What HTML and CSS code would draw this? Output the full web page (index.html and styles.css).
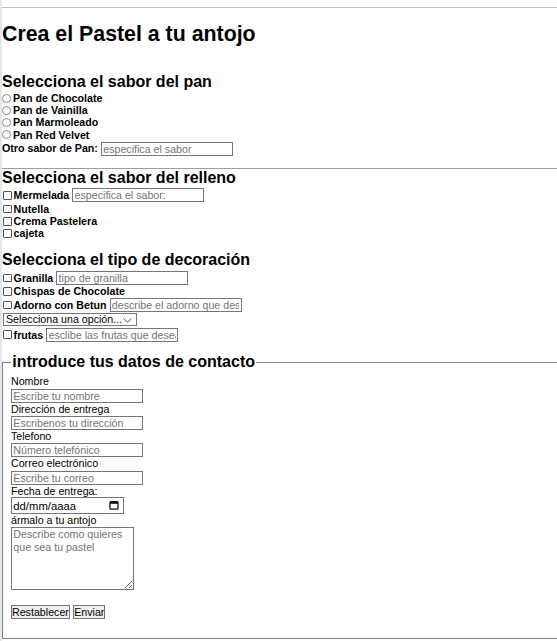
FILE: index.html
```html
<!DOCTYPE html>
<html lang="es">
<head>
<meta charset="utf-8">
<title>Crea el Pastel a tu antojo</title>
<link rel="stylesheet" href="styles.css">
</head>
<body>
<div class="topline"></div>
<h1 class="title">Crea el Pastel a tu antojo</h1>
<form class="form">
  <h2 class="sec-title sec-pan">Selecciona el sabor del pan</h2>
  <label class="row first"><input type="radio" name="pan" class="radio"><span>Pan de Chocolate</span></label>
  <label class="row"><input type="radio" name="pan" class="radio"><span>Pan de Vainilla</span></label>
  <label class="row"><input type="radio" name="pan" class="radio"><span>Pan Marmoleado</span></label>
  <label class="row"><input type="radio" name="pan" class="radio"><span>Pan Red Velvet</span></label>
  <div class="row row-input"><label class="plain-lbl">Otro sabor de Pan:</label><input type="text" class="txt" placeholder="especifica el sabor"></div>

  <hr class="divider">

  <h2 class="sec-title sec-relleno">Selecciona el sabor del relleno</h2>
  <div class="row row-input"><label class="chk-lbl"><input type="checkbox" class="check"><span>Mermelada</span></label><input type="text" class="txt" placeholder="especifica el sabor:"></div>
  <label class="row"><input type="checkbox" class="check"><span>Nutella</span></label>
  <label class="row"><input type="checkbox" class="check"><span>Crema Pastelera</span></label>
  <label class="row"><input type="checkbox" class="check"><span>cajeta</span></label>

  <h2 class="sec-title sec-deco">Selecciona el tipo de decoración</h2>
  <div class="row row-input first-deco"><label class="chk-lbl"><input type="checkbox" class="check"><span>Granilla</span></label><input type="text" class="txt" placeholder="tipo de granilla"></div>
  <label class="row"><input type="checkbox" class="check"><span>Chispas de Chocolate</span></label>
  <div class="row row-input"><label class="chk-lbl"><input type="checkbox" class="check"><span>Adorno con Betun</span></label><input type="text" class="txt" placeholder="describe el adorno que deseas"></div>
  <div class="row row-select">
    <span class="select-wrap">
      <select class="select">
        <option>Selecciona una opción...</option>
        <option>Fondant</option>
        <option>Flores</option>
      </select>
      <svg class="chev" width="9" height="5" viewBox="0 0 9 5"><path d="M0.5 0.5 L4.5 4.3 L8.5 0.5" fill="none" stroke="#555" stroke-width="1"/></svg>
    </span>
  </div>
  <div class="row row-input"><label class="chk-lbl"><input type="checkbox" class="check"><span>frutas</span></label><input type="text" class="txt" placeholder="esclibe las frutas que deseas"></div>

  <fieldset class="contact">
    <legend class="legend"><h2 class="legend-title">introduce tus datos de contacto</h2></legend>
    <label class="field-label">Nombre</label>
    <input type="text" class="ctxt" placeholder="Escribe tu nombre">
    <label class="field-label">Dirección de entrega</label>
    <input type="text" class="ctxt" placeholder="Escribenos tu dirección">
    <label class="field-label">Telefono</label>
    <input type="text" class="ctxt" placeholder="Número telefónico">
    <label class="field-label">Correo electrónico</label>
    <input type="text" class="ctxt" placeholder="Escribe tu correo">
    <label class="field-label">Fecha de entrega:</label>
    <span class="date-wrap">
      <input type="text" class="date" placeholder="dd/mm/aaaa">
      <svg class="cal" width="10" height="10" viewBox="0 0 10 10"><rect x="1" y="1.6" width="8" height="7.6" rx="1" fill="none" stroke="#111" stroke-width="1.3"/><rect x="1" y="1.6" width="8" height="2.2" fill="#111"/></svg>
    </span>
    <label class="field-label">ármalo a tu antojo</label>
    <textarea class="area" placeholder="Describe como quieres que sea tu pastel"></textarea>
    <div class="buttons">
      <button type="reset" class="btn">Restablecer</button>
      <button type="submit" class="btn">Enviar</button>
    </div>
  </fieldset>
</form>
</body>
</html>
```
FILE: styles.css
```css
html, body {
  overflow: hidden;
}
body {
  margin: 0;
  border-left: 2px solid #e0e8f0;
  min-height: 641px;
  box-sizing: border-box;
  font-family: "Liberation Sans", Arial, sans-serif;
  font-size: 10.67px;
  line-height: 12.3px;
  color: #000;
  background: #fff;
}
.topline {
  margin-top: 7px;
  border-top: 1px solid #b9c1c6;
}
.title {
  margin: 14px 0 0;
  font-size: 21.33px;
  line-height: 24.5px;
  font-weight: bold;
}
.form {
  margin: 0;
}
.sec-title {
  margin: 0;
  font-size: 16px;
  line-height: 18.4px;
  font-weight: bold;
}
.sec-pan { margin-top: 26.2px; }
.sec-relleno { margin-top: 0.4px; }
.sec-deco { margin-top: 11.3px; }

.row {
  display: flex;
  align-items: center;
  height: 12.3px;
  font-weight: bold;
  white-space: nowrap;
}
.row.first { margin-top: 0.8px; }
.row-input { height: 15px; }
.row-select { height: 14.6px; }
.first-deco { margin-top: 1px; }

.chk-lbl {
  display: flex;
  align-items: center;
}
.radio {
  appearance: none;
  -webkit-appearance: none;
  box-sizing: border-box;
  width: 9px;
  height: 9px;
  margin: 0 2px 0 0;
  border: 1px solid #8a8a8a;
  border-radius: 50%;
  background: #fff;
}
.check {
  appearance: none;
  -webkit-appearance: none;
  box-sizing: border-box;
  width: 8.6px;
  height: 8.6px;
  margin: 0 2px 0 1px;
  border: 1px solid #555;
  border-radius: 1px;
  background: #fff;
}
.txt, .ctxt, .date, .select, .area, .btn {
  font-family: "Liberation Sans", Arial, sans-serif;
  font-size: 10.67px;
  color: #000;
}
.txt {
  box-sizing: border-box;
  width: 132px;
  height: 14px;
  margin: 0 0 0 3px;
  padding: 0 1.3px;
  border: 1px solid #767676;
  border-radius: 0;
  outline: none;
  font-weight: normal;
}
.txt::placeholder, .ctxt::placeholder, .area::placeholder {
  color: #757575;
  opacity: 1;
}
.select-wrap {
  position: relative;
  display: inline-block;
  margin-left: 0.7px;
}
.select {
  appearance: none;
  -webkit-appearance: none;
  box-sizing: border-box;
  display: block;
  width: 134.6px;
  height: 13px;
  margin: 0;
  padding: 0 0 0 2.3px;
  border: 1px solid #767676;
  border-radius: 0;
  background: #fff;
  font-weight: normal;
  line-height: 11px;
}
.chev {
  position: absolute;
  right: 5px;
  top: 4.3px;
  pointer-events: none;
}

.divider {
  margin: 11.9px 0 0;
  border: 0;
  border-top: 1px solid #9e9e9e;
  height: 0;
}

.contact {
  margin: 11.1px -3px 0 0;
  padding: 3.7px 8px 19px 8px;
  border: 1px solid #7f7f7f;
  min-width: 0;
}
.legend {
  padding: 0 1.3px;
}
.legend-title {
  margin: 0;
  font-size: 16px;
  line-height: 18.4px;
  font-weight: bold;
}
.field-label {
  display: block;
  line-height: 12.3px;
  height: 12.3px;
  white-space: nowrap;
}
.ctxt {
  display: block;
  box-sizing: border-box;
  width: 132.4px;
  height: 14px;
  margin: 1px 0 0;
  padding: 0 1.3px;
  border: 1px solid #767676;
  border-radius: 0;
  outline: none;
}
.date-wrap {
  position: relative;
  display: block;
  width: 113.4px;
  height: 17px;
  margin-top: 0.3px;
}
.date {
  box-sizing: border-box;
  display: block;
  width: 113.4px;
  height: 17px;
  margin: 0;
  padding: 0 1.3px;
  border: 1px solid #767676;
  border-radius: 0;
  outline: none;
  font-size: 11.3px;
}
.date::placeholder {
  color: #000;
  opacity: 1;
}
.cal {
  position: absolute;
  right: 5px;
  top: 3px;
  pointer-events: none;
}
.area {
  display: block;
  box-sizing: border-box;
  width: 123.4px;
  height: 63px;
  margin: 0.5px 0 0;
  padding: 0 1.3px;
  border: 1px solid #767676;
  border-radius: 0;
  line-height: 13px;
  outline: none;
}
.buttons {
  display: flex;
  gap: 3.3px;
  margin-top: 15px;
}
.btn {
  box-sizing: border-box;
  height: 14px;
  margin: 0;
  padding: 0;
  border: 1px solid #767676;
  border-radius: 0;
  background: #efefef;
  line-height: 12px;
}
```
